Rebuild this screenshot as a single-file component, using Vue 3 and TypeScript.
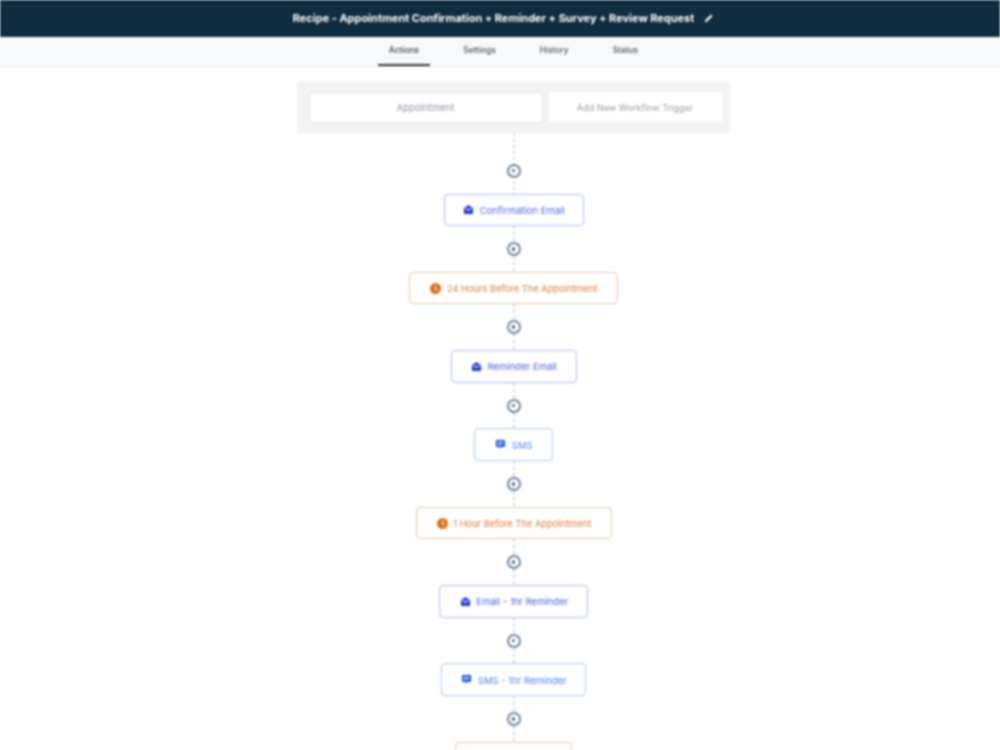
<script setup lang="ts">
type Kind = 'email' | 'sms' | 'wait'
interface Step { label: string; kind: Kind; width: number }

const tabs = ['Actions', 'Settings', 'History', 'Status']
const steps: Step[] = [
  { label: 'Confirmation Email', kind: 'email', width: 140 },
  { label: '24 Hours Before The Appointment', kind: 'wait', width: 209 },
  { label: 'Reminder Email', kind: 'email', width: 126 },
  { label: 'SMS', kind: 'sms', width: 79 },
  { label: '1 Hour Before The Appointment', kind: 'wait', width: 196 },
  { label: 'Email - 1hr Reminder', kind: 'email', width: 149 },
  { label: 'SMS - 1hr Reminder', kind: 'sms', width: 145 },
  { label: '', kind: 'wait', width: 117 },
]
</script>

<template>
  <div class="page">
    <header class="title-bar">
      <span class="title">Recipe - Appointment Confirmation + Reminder + Survey + Review Request</span>
      <svg class="pencil" width="10" height="10" viewBox="0 0 10 10" aria-hidden="true">
        <path d="M0.8 9.2 L1.4 6.9 L6.9 1.4 L8.6 3.1 L3.1 8.6 Z" fill="#fff" />
      </svg>
    </header>
    <nav class="tabs">
      <a v-for="(tab, i) in tabs" :key="tab" class="tab" :class="{ active: i === 0 }">{{ tab }}</a>
    </nav>
    <main class="canvas">
      <section class="triggers">
        <div class="trigger primary">Appointment</div>
        <div class="trigger add">Add New Workflow Trigger</div>
      </section>
      <div class="flow">
        <template v-for="(step, i) in steps" :key="i">
          <div class="link" :class="{ first: i === 0 }">
            <span class="plus"><span class="dot"></span></span>
          </div>
          <div class="node" :class="step.kind" :style="{ width: step.width + 'px' }">
            <svg v-if="step.kind === 'email' && step.label" width="11" height="11" viewBox="0 0 12 12" aria-hidden="true">
              <path d="M1 4.6 L6 1 L11 4.6 V10.2 Q11 11 10.2 11 H1.8 Q1 11 1 10.2 Z" fill="#1f3bd6" />
              <path d="M2.6 4.8 L6 7 L9.4 4.8" fill="none" stroke="#fff" stroke-width="1.2" />
            </svg>
            <svg v-else-if="step.kind === 'sms'" width="11" height="11" viewBox="0 0 12 12" aria-hidden="true">
              <path d="M1.8 1 H10.2 Q11 1 11 1.8 V8 Q11 8.8 10.2 8.8 H6.8 L5 11 V8.8 H1.8 Q1 8.8 1 8 V1.8 Q1 1 1.8 1 Z" fill="#1d5ceb" />
              <path d="M3 3.8 H9 M3 6 H7.5" stroke="#fff" stroke-width="1" />
            </svg>
            <svg v-else-if="step.label" width="11" height="11" viewBox="0 0 11 11" aria-hidden="true">
              <circle cx="5.5" cy="5.5" r="5.5" fill="#d9701c" />
              <path d="M5.5 2.8 V5.8 L7.4 7" fill="none" stroke="#fff" stroke-width="1.1" />
            </svg>
            <span v-if="step.label" class="label">{{ step.label }}</span>
          </div>
        </template>
      </div>
    </main>
  </div>
</template>

<style>
html, body { margin: 0; background: #fff; overflow: hidden; }
</style>

<style scoped>
.page {
  width: 1000px;
  height: 750px;
  overflow: hidden;
  font-family: Inter, "Liberation Sans", sans-serif;
  filter: blur(0.85px);
  background: #fff;
}
.title-bar {
  height: 37px;
  background: #0f2c41;
  display: flex;
  align-items: center;
  justify-content: center;
  gap: 10px;
  padding: 0 0 2px 7px;
  box-sizing: border-box;
  color: #fff;
}
.title { font-size: 11px; font-weight: 700; letter-spacing: -0.03px; white-space: nowrap; }
.tabs {
  height: 30px;
  box-sizing: border-box;
  background: #f8f9fb;
  border-bottom: 1px solid #e6e8ec;
  display: flex;
  justify-content: center;
  gap: 22px;
  padding-left: 27px;
}
.tab {
  padding: 0 11px;
  font-size: 8.4px;
  line-height: 26px;
  color: #4c535e;
  box-sizing: border-box;
  font-weight: 500;
}
.tab.active { color: #333a44; border-bottom: 2px solid #2a2f36; }
.canvas { display: flex; flex-direction: column; align-items: center; padding: 15px 0 0 27px; }
.triggers {
  width: 434px;
  height: 51px;
  box-sizing: border-box;
  background: #f2f3f5;
  border-radius: 4px;
  padding: 10px 9px 10px 12px;
  display: flex;
  gap: 6px;
}
.trigger {
  display: flex;
  align-items: center;
  justify-content: center;
  font-size: 9.5px;
  color: #8c93a0;
  background: #fff;
  box-sizing: border-box;
  border-radius: 3px;
}
.trigger.primary { width: 234px; height: 31px; border: 1.5px solid #e2e4e9; }
.trigger.add { width: 173px; height: 30px; font-size: 9.1px; color: #969ca8; }
.flow { display: flex; flex-direction: column; align-items: center; }
.link {
  height: 45.83px;
  width: 20px;
  display: flex;
  align-items: center;
  justify-content: center;
  background-image: repeating-linear-gradient(to bottom, #d2d7df 0 3px, transparent 3px 6px);
  background-size: 2px 100%;
  background-repeat: no-repeat;
  background-position: center;
}
.link.first { height: 60.5px; padding-top: 14.5px; box-sizing: border-box; }
.plus {
  width: 14px;
  height: 14px;
  box-sizing: border-box;
  border: 2px solid #71839d;
  border-radius: 50%;
  background: #fff;
  display: flex;
  align-items: center;
  justify-content: center;
}
.dot { width: 3.5px; height: 3.5px; border-radius: 50%; background: #4f6079; }
.node {
  height: 32.5px;
  flex: none;
  box-sizing: border-box;
  background: #fff;
  border: 1.5px solid;
  border-radius: 4px;
  display: flex;
  align-items: center;
  justify-content: center;
  gap: 5.5px;
  padding-left: 1px;
  font-size: 9.5px;
  white-space: nowrap;
}
.label { padding-top: 1px; }
.node.email { border-color: #aab8f8; color: #4a61de; }
.node.sms { border-color: #aac6fa; color: #4d80f0; }
.node.wait { border-color: #f2bf9c; color: #da7a34; font-size: 9.3px; }
</style>
